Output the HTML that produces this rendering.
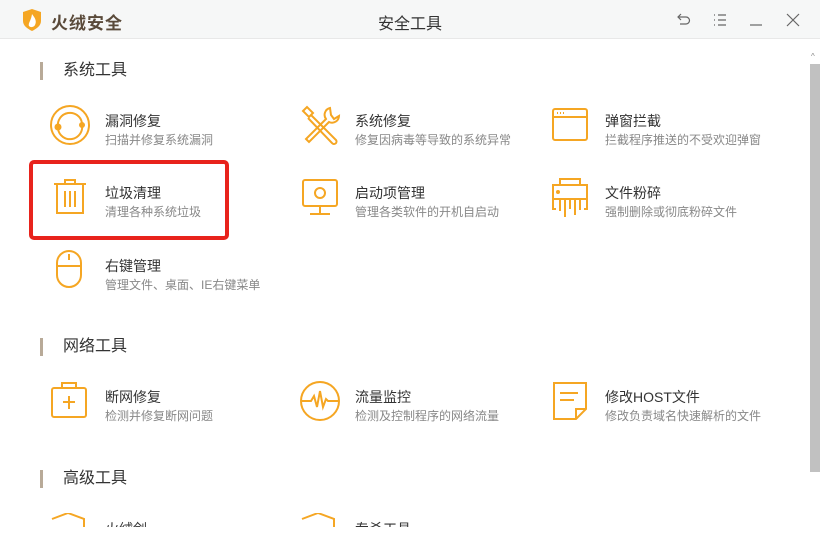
<!DOCTYPE html><html><head><meta charset="utf-8"><style>
*{margin:0;padding:0;box-sizing:border-box}
body{width:820px;height:540px;overflow:hidden;background:#fff;font-family:"Liberation Sans","Noto Sans CJK SC",sans-serif;position:relative}
.hd{position:absolute;left:0;top:0;width:820px;height:39px;background:#f6f7f7;border-bottom:1px solid #e8e8e8}
.ab{position:absolute}
.sec{position:absolute;left:40px;font-size:16px;color:#333;padding-left:23px;line-height:18px}
.sec:before{content:"";position:absolute;left:0;top:0;width:3px;height:18px;background:#b8aa98}
.it{position:absolute}
.it .t{position:absolute;left:55px;top:0;font-size:14px;color:#333;white-space:nowrap;line-height:16px}
.it .d{position:absolute;left:55px;top:20px;font-size:12px;color:#888;white-space:nowrap;line-height:14px}
.it svg{position:absolute;left:0;top:-8px}
</style></head><body>
<div class="hd"></div>
<svg class="ab" style="left:22px;top:9px" width="20" height="22" viewBox="0 0 20 22"><path d="M1 3 L10 0 L19 3 V12 C19 17 14 20 10 22 C6 20 1 17 1 12Z" fill="#f5a623"/><path d="M10 5 C13 9 15 12 13 16 C12 18 9 19 7 17 C6 14 9 12 10 5Z" fill="#fff"/></svg>
<div class="ab" style="left:51px;top:9px;font-size:17px;font-weight:bold;color:#5a4a3a;letter-spacing:1px">火绒安全</div>
<div class="ab" style="left:378px;top:10px;font-size:16px;color:#333">安全工具</div>
<svg class="ab" style="left:676px;top:12px" width="16" height="16" viewBox="0 0 16 16" fill="none" stroke="#666" stroke-width="1.2"><path d="M5 2 L2 5 L5 8"/><path d="M2 5 H10 A3.5 3.5 0 0 1 10 12 H4"/></svg>
<svg class="ab" style="left:712px;top:13px" width="16" height="14" viewBox="0 0 16 14" fill="none" stroke="#666" stroke-width="1.2"><path d="M2 2h1M2 7h1M2 12h1M6 2h8M6 7h8M6 12h8"/></svg>
<svg class="ab" style="left:748px;top:12px" width="16" height="16" viewBox="0 0 16 16"><path d="M2 13H14" stroke="#666" stroke-width="1.2"/></svg>
<svg class="ab" style="left:785px;top:12px" width="16" height="16" viewBox="0 0 16 16" fill="none" stroke="#666" stroke-width="1.2"><path d="M2 2L14 14M14 2L2 14"/></svg>
<div class="ab" style="left:810px;top:64px;width:10px;height:408px;background:#c1c1c1"></div>
<div class="ab" style="left:811px;top:52px;font-size:8px;color:#888">^</div>

<div class="sec" style="top:62px">系统工具</div>
<div class="sec" style="top:338px">网络工具</div>
<div class="sec" style="top:470px">高级工具</div>

<div class="ab" style="left:29px;top:160px;width:200px;height:80px;border:4px solid #e8231c;border-radius:5px"></div>

<div class="it" style="left:50px;top:113px"><svg width="42" height="42" viewBox="0 0 42 42" fill="none" stroke="#f5a623" stroke-width="2"><circle cx="20" cy="20" r="19"/><path d="M8 22 A12 12 0 0 1 32 18"/><path d="M32 20 A12 12 0 0 1 8 24"/><circle cx="8" cy="22" r="2.5" fill="#f5a623"/><circle cx="32" cy="20" r="2" fill="#f5a623"/></svg><div class="t">漏洞修复</div><div class="d">扫描并修复系统漏洞</div></div>
<div class="it" style="left:300px;top:113px"><svg width="42" height="42" viewBox="0 0 42 42" fill="none" stroke="#f5a623" stroke-width="2"><path d="M3 6 L7 2 L13 8 L9 12Z"/><path d="M11 10 L36 35 A2.5 2.5 0 0 1 32 38 L8 13"/><path d="M30 3 A7 7 0 0 0 26 14 L6 34 L9 37 L29 17 A7 7 0 0 0 39 11 L34 14 L31 10Z"/></svg><div class="t">系统修复</div><div class="d">修复因病毒等导致的系统异常</div></div>
<div class="it" style="left:550px;top:113px"><svg width="42" height="42" viewBox="0 0 42 42" fill="none" stroke="#f5a623" stroke-width="2"><rect x="3" y="4" width="34" height="31" rx="2"/><path d="M3 12H37"/><path d="M7 8h1M10 8h1M13 8h1"/></svg><div class="t">弹窗拦截</div><div class="d">拦截程序推送的不受欢迎弹窗</div></div>

<div class="it" style="left:50px;top:185px"><svg width="42" height="42" viewBox="0 0 42 42" fill="none" stroke="#f5a623" stroke-width="2"><path d="M4 7H36M15 7V3H25V7"/><path d="M7 7V36H33V7"/><path d="M15 14V30M20 14V30M25 14V30"/></svg><div class="t">垃圾清理</div><div class="d">清理各种系统垃圾</div></div>
<div class="it" style="left:300px;top:185px"><svg width="42" height="42" viewBox="0 0 42 42" fill="none" stroke="#f5a623" stroke-width="2"><rect x="3" y="3" width="34" height="26" rx="2"/><circle cx="20" cy="16" r="5"/><path d="M20 29V36M10 37H30"/></svg><div class="t">启动项管理</div><div class="d">管理各类软件的开机自启动</div></div>
<div class="it" style="left:550px;top:185px"><svg width="42" height="42" viewBox="0 0 42 42" fill="none" stroke="#f5a623" stroke-width="2"><path d="M10 8V2H30V8"/><path d="M6 32H3V8H37V32H34"/><path d="M3 22H37"/><circle cx="8" cy="15" r="1" fill="#f5a623"/><path d="M10 22V34M15 22V40M20 22V32M25 22V38M30 22V33"/></svg><div class="t">文件粉碎</div><div class="d">强制删除或彻底粉碎文件</div></div>

<div class="it" style="left:50px;top:258px"><svg width="42" height="42" viewBox="0 0 42 42" fill="none" stroke="#f5a623" stroke-width="2"><rect x="7" y="1" width="24" height="36" rx="12"/><path d="M7 16H31M19 4V10"/></svg><div class="t">右键管理</div><div class="d">管理文件、桌面、IE右键菜单</div></div>

<div class="it" style="left:50px;top:389px"><svg width="42" height="42" viewBox="0 0 42 42" fill="none" stroke="#f5a623" stroke-width="2"><rect x="2" y="7" width="34" height="29" rx="2"/><path d="M12 7V2H26V7"/><path d="M19 15V28M13 21H25"/></svg><div class="t">断网修复</div><div class="d">检测并修复断网问题</div></div>
<div class="it" style="left:300px;top:389px"><svg width="42" height="42" viewBox="0 0 42 42" fill="none" stroke="#f5a623" stroke-width="2"><circle cx="20" cy="20" r="19"/><path d="M1 20H11L14 15L17 26L20 10L23 26L26 18L28 20H39"/></svg><div class="t">流量监控</div><div class="d">检测及控制程序的网络流量</div></div>
<div class="it" style="left:550px;top:389px"><svg width="42" height="42" viewBox="0 0 42 42" fill="none" stroke="#f5a623" stroke-width="2"><path d="M4 2H36V28L26 38H4Z"/><path d="M26 38V28H36"/><path d="M10 12H28M10 19H24"/></svg><div class="t">修改HOST文件</div><div class="d">修改负责域名快速解析的文件</div></div>

<div class="it" style="left:50px;top:521px"><svg width="42" height="42" viewBox="0 0 42 42" fill="none" stroke="#f5a623" stroke-width="2"><path d="M2 6 L18 0 L34 6 V20"/></svg><div class="t">火绒剑</div></div>
<div class="it" style="left:300px;top:521px"><svg width="42" height="42" viewBox="0 0 42 42" fill="none" stroke="#f5a623" stroke-width="2"><path d="M2 6 L18 0 L34 6 V20"/></svg><div class="t">专杀工具</div></div>
<div class="ab" style="left:0;top:527px;width:808px;height:13px;background:#fff"></div>
</body></html>
